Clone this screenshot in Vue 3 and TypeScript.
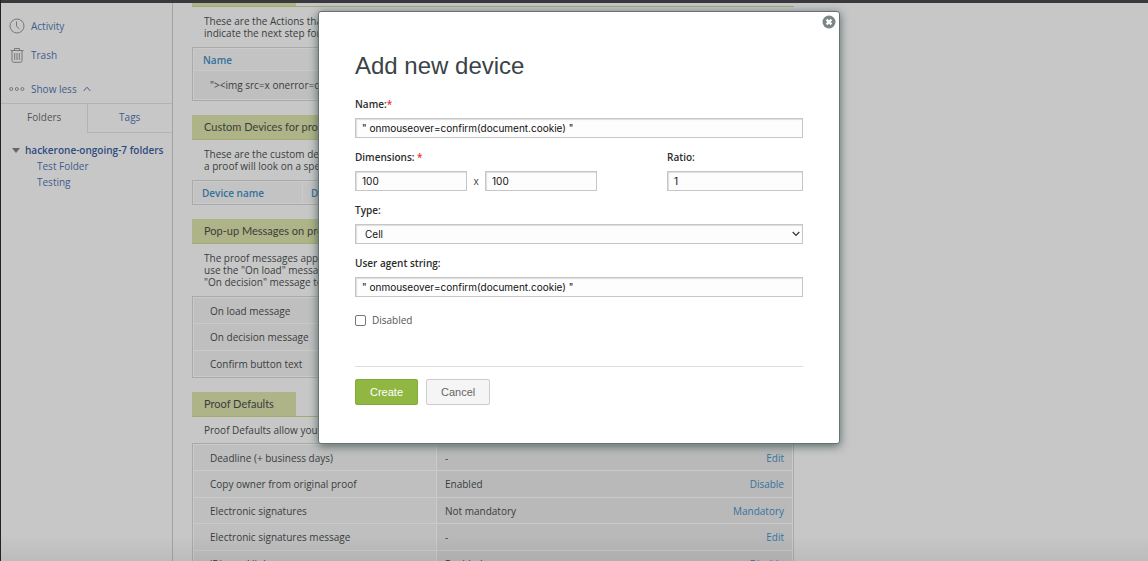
<script setup lang="ts">
import { ref } from 'vue'

interface Setting {
  label: string
  value: string
  action: string
}

const messages: string[] = ['On load message', 'On decision message', 'Confirm button text']

const defaults: Setting[] = [
  { label: 'Deadline (+ business days)', value: '-', action: 'Edit' },
  { label: 'Copy owner from original proof', value: 'Enabled', action: 'Disable' },
  { label: 'Electronic signatures', value: 'Not mandatory', action: 'Mandatory' },
  { label: 'Electronic signatures message', value: '-', action: 'Edit' },
  { label: "'Discuss' link", value: 'Enabled', action: 'Disable' },
]

const folders: string[] = ['Test Folder', 'Testing']

const name = ref('" onmouseover=confirm(document.cookie) "')
const width = ref('100')
const height = ref('100')
const ratio = ref('1')
const kind = ref('Cell')
const agent = ref('" onmouseover=confirm(document.cookie) "')
const disabled = ref(false)
</script>

<template>
  <div class="page">
    <div class="topbar"></div>
    <div class="columns">
      <aside class="sidebar">
        <nav class="links">
          <a href="#" class="link">
            <svg width="16" height="16" viewBox="0 0 16 16" fill="none" stroke="#777" stroke-width="1">
              <circle cx="8" cy="8" r="7" />
              <path d="M7.5 3.5V8.2L10.5 11" />
            </svg>
            Activity
          </a>
          <a href="#" class="link">
            <svg width="16" height="16" viewBox="0 0 16 16" fill="none" stroke="#777" stroke-width="1">
              <path d="M1.5 3.5H14.5M5.5 3.5V1.5H10.5V3.5M3 3.5V13.5Q3 15.3 4.8 15.3H11.2Q13 15.3 13 13.5V3.5M5.7 6V13M8 6V13M10.3 6V13" />
            </svg>
            Trash
          </a>
          <a href="#" class="link less">
            <svg width="16" height="16" viewBox="0 0 16 16" fill="none" stroke="#777" stroke-width="1">
              <circle cx="2.2" cy="8" r="1.5" />
              <circle cx="7.8" cy="8" r="1.5" />
              <circle cx="13.4" cy="8" r="1.5" />
            </svg>
            Show less
            <svg width="8" height="6" viewBox="0 0 8 6" fill="none" stroke="#4b6085" stroke-width="1">
              <path d="M0.7 5L4 1.2L7.3 5" />
            </svg>
          </a>
        </nav>
        <div class="tabs">
          <button type="button" class="tab active">Folders</button>
          <button type="button" class="tab">Tags</button>
        </div>
        <div class="tree">
          <a href="#" class="root">
            <svg width="8" height="5" viewBox="0 0 8 5"><path d="M0 0H8L4 5Z" fill="#666" /></svg>
            hackerone-ongoing-7 folders
          </a>
          <a v-for="f in folders" :key="f" href="#" class="child">{{ f }}</a>
        </div>
      </aside>

      <main class="content">
        <div class="head stub"><span></span></div>
        <p class="intro">These are the Actions that<br />indicate the next step for</p>
        <table class="grid actions">
          <thead>
            <tr><th>Name</th></tr>
          </thead>
          <tbody>
            <tr><td>"&gt;&lt;img src=x onerror=confirm</td></tr>
          </tbody>
        </table>

        <h2 class="head"><span class="long">Custom Devices for proofs</span></h2>
        <p class="intro">These are the custom devices<br />a proof will look on a specific</p>
        <table class="grid devices">
          <thead>
            <tr><th class="first">Device name</th><th>Dimensions</th></tr>
          </thead>
        </table>

        <h2 class="head"><span class="long">Pop-up Messages on proofs</span></h2>
        <p class="intro">The proof messages appear<br />use the "On load" message<br />"On decision" message to</p>
        <table class="grid rows">
          <tbody>
            <tr v-for="m in messages" :key="m"><td>{{ m }}</td></tr>
          </tbody>
        </table>

        <h2 class="head"><span>Proof Defaults</span></h2>
        <p class="intro single">Proof Defaults allow you to</p>
        <table class="grid rows">
          <tbody>
            <tr v-for="d in defaults" :key="d.label">
              <td class="key">{{ d.label }}</td>
              <td class="val">
                <div class="pair"><span>{{ d.value }}</span><a href="#">{{ d.action }}</a></div>
              </td>
            </tr>
          </tbody>
        </table>
      </main>
    </div>
    <div class="fade"></div>

    <div class="overlay">
      <form class="dialog" role="dialog" aria-labelledby="title" @submit.prevent>
        <button type="button" class="close" aria-label="Close">
          <svg width="14" height="14" viewBox="0 0 14 14">
            <circle cx="7" cy="7" r="6.5" fill="#7d8686" />
            <path d="M4.6 4.6L9.4 9.4M9.4 4.6L4.6 9.4" stroke="#fff" stroke-width="2.2" />
          </svg>
        </button>
        <h1 id="title">Add new device</h1>

        <div class="field">
          <label for="name">Name:<i>*</i></label>
          <input id="name" v-model="name" type="text" />
        </div>
        <div class="split">
          <div class="field">
            <label for="width">Dimensions: <i>*</i></label>
            <div class="dims">
              <input id="width" v-model="width" type="text" />
              <span>x</span>
              <input v-model="height" type="text" aria-label="Height" />
            </div>
          </div>
          <div class="field ratio">
            <label for="ratio">Ratio:</label>
            <input id="ratio" v-model="ratio" type="text" />
          </div>
        </div>
        <div class="field">
          <label for="kind">Type:</label>
          <div class="choice">
            <select id="kind" v-model="kind">
              <option>Cell</option>
            </select>
            <svg width="8" height="6" viewBox="0 0 8 6" fill="none" stroke="#333" stroke-width="1.2">
              <path d="M0.7 1L4 4.4L7.3 1" />
            </svg>
          </div>
        </div>
        <div class="field">
          <label for="agent">User agent string:</label>
          <input id="agent" v-model="agent" type="text" />
        </div>
        <div class="check">
          <input id="disabled" v-model="disabled" type="checkbox" />
          <label for="disabled">Disabled</label>
        </div>
        <div class="buttons">
          <button type="submit" class="btn create">Create</button>
          <button type="button" class="btn">Cancel</button>
        </div>
      </form>
    </div>
  </div>
</template>

<style>
body {
  margin: 0;
  overflow: hidden;
}
</style>

<style scoped>
* {
  box-sizing: border-box;
}
.page {
  position: relative;
  display: flex;
  flex-direction: column;
  height: 100vh;
  overflow: hidden;
  background: #c7c7c7;
  border-left: 1px solid #222;
  color: #3a3d40;
  font: 10px/12px "Open Sans", "Noto Sans", sans-serif;
}
.topbar {
  flex: none;
  height: 3px;
  background: #39383d;
}
.columns {
  display: flex;
  flex: 1;
  min-height: 0;
}
a {
  color: #415c8c;
  text-decoration: none;
}
.sidebar {
  flex: none;
  width: 172px;
  border-right: 1px solid #a3a3a3;
}
.links {
  display: flex;
  flex-direction: column;
  gap: 13px;
  padding: 15px 8px 6px;
}
.link {
  display: flex;
  align-items: center;
  gap: 6px;
  height: 16px;
}
.less {
  margin-top: 5px;
}
.tabs {
  display: flex;
  border-top: 1px solid #b3b3b3;
}
.tab {
  flex: 1;
  height: 29px;
  padding: 0 0 2px;
  border: 0;
  border-left: 1px solid #b3b3b3;
  border-bottom: 1px solid #b3b3b3;
  background: none;
  color: #415c8c;
  font: inherit;
}
.tab.active {
  border-color: transparent;
  color: #555;
}
.tree {
  display: flex;
  flex-direction: column;
  padding: 9px 0 0 11px;
}
.tree a {
  line-height: 16px;
}
.root {
  display: flex;
  align-items: center;
  gap: 5px;
  white-space: nowrap;
}
.tree .root {
  color: #2f4a80;
  font-weight: 600;
}
.child {
  padding-left: 25px;
}
.content {
  width: 621px;
  padding-left: 19px;
}
.head {
  display: flex;
  height: 25px;
  margin: 14px 0 0;
  border-bottom: 1px solid #a3ab73;
  font: 11px/24px Lato, sans-serif;
}
.head span {
  min-width: 104px;
  padding: 0 12px;
  background: #aeb487;
}
.head .long {
  min-width: 240px;
}
.stub {
  height: 4px;
  margin: 0;
}
.intro {
  margin: 0;
  padding: 8px 12px;
  white-space: nowrap;
}
.single {
  padding: 7px 12px;
}
.grid {
  width: 100%;
  border: 1px solid #aaa;
  border-spacing: 1px;
  background: #cacaca;
}
.grid th,
.grid td {
  height: 28px;
  padding: 0 16px;
  background: #bfbfbf;
  text-align: left;
  white-space: nowrap;
}
.grid th {
  height: 21px;
  padding: 0 9px;
  background: #c3c3c3;
  color: #33709b;
  font-weight: 600;
}
.devices .first {
  width: 108px;
}
.grid.devices th {
  padding: 0 8px;
}
.rows td {
  height: 25px;
}
.rows tr:nth-child(even) td {
  height: 26px;
}
.grid .key {
  width: 242px;
}
.grid .val {
  padding: 0 8px;
  background: #b9b9b9;
}
.pair {
  display: flex;
  justify-content: space-between;
}
.pair a {
  color: #35749f;
}
.fade {
  position: absolute;
  inset: auto 0 0;
  height: 26px;
  background: linear-gradient(transparent, rgba(0, 0, 0, 0.06));
}
.overlay {
  position: absolute;
  inset: 0;
  display: flex;
  align-items: flex-start;
  justify-content: center;
  padding: 11px 0 0 9px;
}
.dialog {
  position: relative;
  width: 522px;
  padding: 39px 36px 38px;
  border: 1px solid #657373;
  border-radius: 3px;
  background: #fff;
  box-shadow: 0 2px 10px rgba(40, 60, 60, 0.7);
}
.close {
  position: absolute;
  top: 3px;
  right: 3px;
  display: flex;
  padding: 0;
  border: 0;
  background: none;
}
h1 {
  margin: 0 0 17px;
  color: #3a4345;
  font: 24px/30px "Liberation Sans", Arial, sans-serif;
}
.field {
  display: flex;
  flex-direction: column;
  margin-bottom: 13px;
}
.field label {
  margin-bottom: 8px;
  font-weight: 600;
  color: #2c2c2c;
}
.field i {
  color: #f03028;
  font-style: normal;
}
.field input,
.field select {
  width: 100%;
  height: 20px;
  padding: 0 6px;
  border: 1px solid #c6c6c6;
  border-radius: 0;
  background: #fdfdfd;
  box-shadow: inset 1px 1px 1px #ddd;
  color: #111;
  font: 10px Inter, sans-serif;
}
.field select {
  padding: 0 9px;
  appearance: none;
}
.split {
  display: flex;
  justify-content: space-between;
}
.dims {
  display: flex;
  align-items: center;
}
.field .dims input {
  width: 112px;
}
.dims span {
  width: 18px;
  text-align: center;
}
.ratio {
  width: 136px;
}
.choice {
  position: relative;
  display: flex;
}
.choice svg {
  position: absolute;
  top: 7px;
  right: 3px;
  pointer-events: none;
}
.check {
  display: flex;
  align-items: center;
  gap: 6px;
  padding: 4px 0 40px;
  color: #555;
}
.check input {
  width: 11px;
  height: 11px;
  margin: 0;
  border: 1px solid #777;
  border-radius: 2px;
  background: #fff;
  appearance: none;
}
.check input:checked {
  background: #8fb742;
}
.buttons {
  display: flex;
  gap: 8px;
  padding-top: 12px;
  border-top: 1px solid #ddd;
}
.btn {
  height: 26px;
  padding: 0 14px;
  border: 1px solid #ccc;
  border-radius: 2px;
  background: #f5f5f5;
  color: #666;
  font: 11px "Liberation Sans", Arial, sans-serif;
}
.create {
  border-color: #83ac36;
  background: #8fb742;
  color: #fff;
}
</style>
